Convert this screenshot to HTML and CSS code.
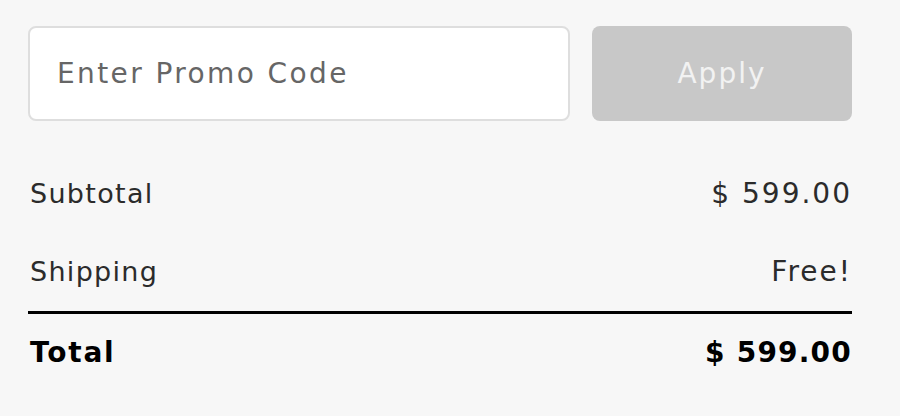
FILE: index.html
```html
<!DOCTYPE html>
<html lang="en">
<head>
    <meta charset="UTF-8">
    <meta name="viewport" content="width=device-width, initial-scale=1.0">
    <title>Cart Summary</title>
    <link rel="stylesheet" href="styles.css">
</head>
<body>
    <div class="cart-summary">
        <div class="promo">
            <input type="text" class="promo-input" placeholder="Enter Promo Code">
            <button class="promo-button" disabled>Apply</button>
        </div>
        <div class="summary">
            <div class="summary-row">
                <span>Subtotal</span>
                <span class="amount">$ 599.00</span>
            </div>
            <div class="summary-row">
                <span>Shipping</span>
                <span class="amount">Free!</span>
            </div>
            <div class="summary-row total">
                <span>Total</span>
                <span class="amount">$ 599.00</span>
            </div>
        </div>
    </div>
</body>
</html>
```

FILE: styles.css
```css
body {
    font-family: "DejaVu Sans", Verdana, sans-serif;
    background-color: #f7f7f7;
    margin: 0;
    color: #2b2b2b;
}

.cart-summary {
    width: 824px;
    padding: 26px 0 0 28px;
}

.promo {
    display: flex;
    gap: 22px;
}

.promo-input {
    flex: 1;
    height: 95px;
    box-sizing: border-box;
    padding: 0 27px;
    font-family: inherit;
    font-size: 28px;
    letter-spacing: 2.4px;
    color: #333;
    background-color: #fff;
    border: 2px solid #dedede;
    border-radius: 8px;
    outline: none;
}

.promo-input::placeholder {
    color: #666;
}

.promo-button {
    width: 260px;
    height: 95px;
    font-family: inherit;
    font-size: 28px;
    letter-spacing: 2px;
    color: #f2f2f2;
    background-color: #c8c8c8;
    border: none;
    border-radius: 8px;
}

.summary {
    margin-top: 34px;
}

.summary-row {
    display: flex;
    justify-content: space-between;
    align-items: center;
    padding: 22px 0 22px 2px;
    line-height: 34px;
    font-size: 27px;
    letter-spacing: 1.3px;
}

.summary-row .amount {
    font-size: 28px;
    letter-spacing: 2px;
}

.summary-row.total {
    border-top: 3px solid #000;
    color: #000;
    font-weight: bold;
    font-size: 28px;
    letter-spacing: 1.8px;
}

.summary-row.total .amount {
    letter-spacing: 1.2px;
}
```
